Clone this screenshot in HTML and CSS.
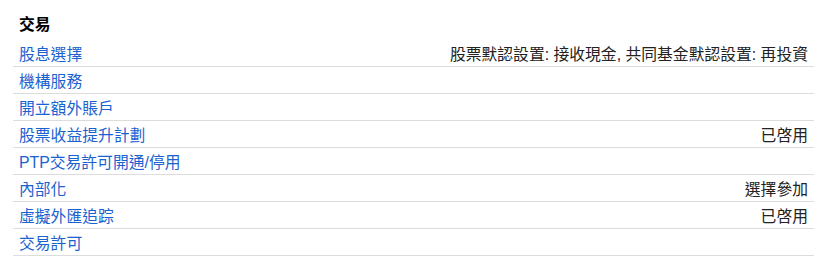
FILE: index.html
```html
<!DOCTYPE html>
<html lang="zh-Hant">
<head>
  <meta charset="UTF-8">
  <title>交易</title>
  <link rel="stylesheet" href="styles.css">
</head>
<body>
  <div class="section">
    <h3>交易</h3>
    <ul class="settings">
      <li><a href="#">股息選擇</a><span>股票默認設置: 接收現金, 共同基金默認設置: 再投資</span></li>
      <li><a href="#">機構服務</a></li>
      <li><a href="#">開立額外賬戶</a></li>
      <li><a href="#">股票收益提升計劃</a><span>已啓用</span></li>
      <li><a href="#">PTP交易許可開通/停用</a></li>
      <li><a href="#">內部化</a><span>選擇參加</span></li>
      <li><a href="#">虛擬外匯追踪</a><span>已啓用</span></li>
      <li><a href="#">交易許可</a></li>
    </ul>
  </div>
</body>
</html>
```

FILE: styles.css
```css
body {
  margin: 0;
  font-family: Arial, "Liberation Sans", "Noto Sans CJK TC", sans-serif;
  font-size: 15.8px;
  color: #222;
}
.section {
  padding: 11px 8px 0 13px;
}
h3 {
  margin: 0;
  padding: 4px 0 0 6px;
  height: 25px;
  line-height: 20px;
  font-size: 15.8px;
  font-weight: bold;
  color: #000;
}
.settings {
  list-style: none;
  margin: 0;
  padding: 0;
}
.settings li {
  display: flex;
  justify-content: space-between;
  align-items: center;
  height: 26px;
  padding: 0 6px;
  border-bottom: 1px solid #dcdcdc;
}
.settings a {
  color: #1a62d0;
  text-decoration: none;
}
.settings span {
  color: #222;
}
```
